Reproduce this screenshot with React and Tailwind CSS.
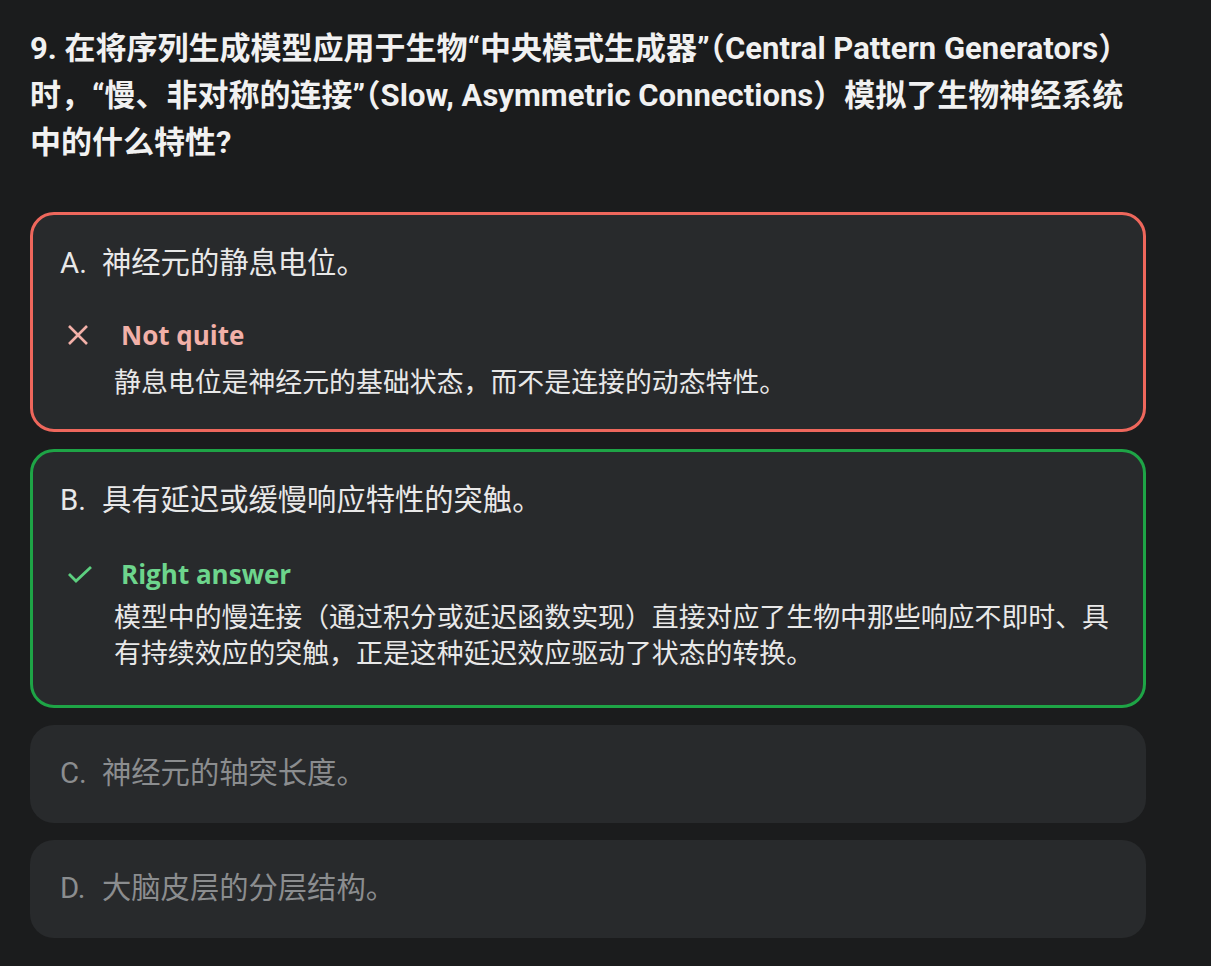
const sans = { fontFamily: 'Roboto, "Noto Sans CJK SC", sans-serif' };
const open = { fontFamily: '"Open Sans", "Noto Sans CJK SC", sans-serif' };

const options = [
  {
    key: "A",
    text: "神经元的静息电位。",
    state: "wrong",
    label: "Not quite",
    note: "静息电位是神经元的基础状态，而不是连接的动态特性。",
  },
  {
    key: "B",
    text: "具有延迟或缓慢响应特性的突触。",
    state: "right",
    label: "Right answer",
    note: "模型中的慢连接（通过积分或延迟函数实现）直接对应了生物中那些响应不即时、具有持续效应的突触，正是这种延迟效应驱动了状态的转换。",
  },
  { key: "C", text: "神经元的轴突长度。" },
  { key: "D", text: "大脑皮层的分层结构。" },
];

const CrossIcon = () => (
  <svg width="22" height="22" viewBox="0 0 22 22" className="text-[#f2b0a8]">
    <path d="M2 2 L20 20 M20 2 L2 20" stroke="currentColor" strokeWidth="2.6" fill="none" />
  </svg>
);

const CheckIcon = () => (
  <svg width="26" height="18" viewBox="0 0 26 18" className="text-[#5ccf7f]">
    <path d="M2 9 L9 16 L24 2" stroke="currentColor" strokeWidth="2.8" fill="none" />
  </svg>
);

const Option = ({ opt }) => {
  const border =
    opt.state === "wrong"
      ? "border-[#ee675c] pt-[29px] pb-[28px]"
      : opt.state === "right"
      ? "border-[#1ea446] pt-[29px] pb-[33px]"
      : "border-transparent pt-[26px] pb-[28px]";
  const textColor = opt.state ? "text-[#e8e8e8]" : "text-[#8b8d8f]";
  return (
    <div className={`rounded-[24px] bg-[#282a2c] px-[27px] border-[3px] ${border}`}>
      <div className={`flex text-[29.3px] leading-[38px] ${textColor}`}>
        <span className="w-[42px] shrink-0">{opt.key}.</span>
        <span>{opt.text}</span>
      </div>
      {opt.state && (
        <div className={opt.state === "right" ? "mt-[37px]" : "mt-[35px]"}>
          <div className="flex items-center h-[36px]">
            <span className="w-[54px] flex pl-[7px]">
              {opt.state === "wrong" ? <CrossIcon /> : <CheckIcon />}
            </span>
            <span
              className={`text-[26px] font-bold pl-[7px] ${
                opt.state === "wrong" ? "text-[#f2b0a8]" : "text-[#6dd58c]"
              }`}
              style={open}
            >
              {opt.label}
            </span>
          </div>
          <p
            className={`pl-[54px] pr-[4px] text-[26.9px] leading-[36px] text-[#e8e8e8] ${
              opt.state === "right" ? "mt-[8px]" : "mt-[12px]"
            }`}
          >
            {opt.note}
          </p>
        </div>
      )}
    </div>
  );
};

export default function App() {
  return (
    <div className="min-h-[966px] bg-[#1b1c1d] px-[30px] pt-[25px] pb-[28px]" style={sans}>
      <div className="w-[1116px]">
        <h1 className="text-[31px] font-bold leading-[47px] text-[#f1f1f1]">
          9. 在将序列生成模型应用于生物“中央模式生成器”（Central Pattern Generators）时，“慢、非对称的连接”（Slow, Asymmetric Connections）模拟了生物神经系统中的什么特性?
        </h1>
        <div className="mt-[46px] flex flex-col gap-[17px]">
          {options.map((o) => (
            <Option key={o.key} opt={o} />
          ))}
        </div>
      </div>
    </div>
  );
}
